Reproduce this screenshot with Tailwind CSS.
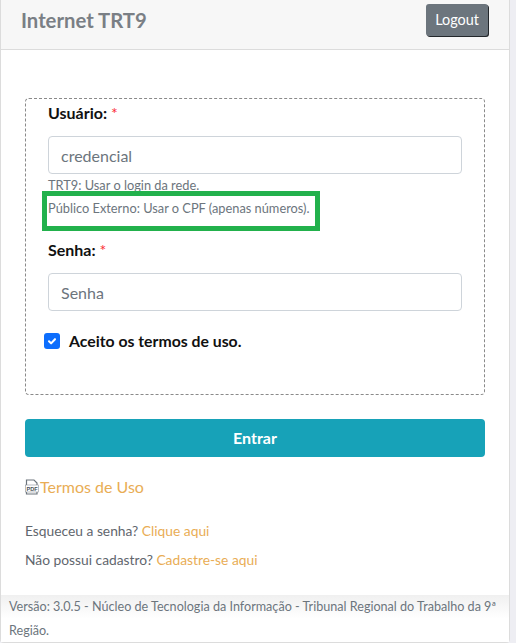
<!DOCTYPE html>
<html lang="pt-BR">
<head>
    <meta charset="UTF-8">
    <meta name="viewport" content="width=device-width, initial-scale=1.0">
    <title>Internet TRT9</title>
    <script src="https://cdn.jsdelivr.net/npm/@tailwindcss/browser@4"></script>
</head>
<body class="bg-[#eeeef3] font-['Lato','Noto_Sans',sans-serif] text-[#6c757d] h-[643px] overflow-hidden">
    <div class="relative w-[510px] h-[643px] bg-white border border-t-0 border-[#dcdcdc] rounded-b flex flex-col">
        <!-- cabecalho -->
        <div class="h-[50px] shrink-0 bg-[#f7f7f7] border-b border-[#dcdcdc] pl-5 pr-[21px] flex justify-between items-start">
            <h1 class="text-[20.3px] font-bold leading-6 mt-[8px] text-[#7a7f85]">Internet TRT9</h1>
            <button class="mt-1 w-[62px] h-[32px] bg-[#6c757d] text-white text-[14.4px] rounded-[3px] shadow-[1px_1px_0_0_#23272b]">Logout</button>
        </div>

        <div class="flex-1 px-6 pt-12">
            <!-- formulario -->
            <div class="h-[297px] border border-dashed border-[#8a8a8a] rounded px-[22px]">
                <label class="block text-base font-bold leading-6 mt-[2px] text-[#111]">Usuário: <span class="text-red-500 font-normal">*</span></label>
                <input class="block mt-[11px] w-[414px] h-[38px] px-3 border border-[#ced4da] rounded text-base text-[#6c757d] placeholder-[#6c757d]" placeholder="credencial">
                <p class="mt-[1px] text-[12.8px] leading-[21px] text-[#6c757d]">TRT9: Usar o login da rede.</p>
                <p class="text-[12.8px] leading-[24px] text-[#6c757d]">Público Externo: Usar o CPF (apenas números).</p>
                <label class="block mt-[18px] text-base font-bold leading-6 text-[#111]">Senha: <span class="text-red-500 font-normal">*</span></label>
                <input class="block mt-[11px] w-[414px] h-[38px] px-3 border border-[#ced4da] rounded text-base placeholder-[#6c757d]" placeholder="Senha">
                <div class="flex items-center mt-[18px] -ml-[4px]">
                    <span class="w-4 h-4 bg-[#0d6efd] rounded-[3px] flex items-center justify-center">
                        <svg width="12" height="12" viewBox="0 0 20 20" fill="none" stroke="#fff" stroke-width="3.4" stroke-linecap="round" stroke-linejoin="round"><path d="M5 10.5l3.5 3.5L15 7"/></svg>
                    </span>
                    <span class="ml-[9px] text-[15.8px] font-bold leading-6 text-[#111]">Aceito os termos de uso.</span>
                </div>
            </div>

            <button class="block w-full h-[38px] mt-6 bg-[#17a2b8] text-white text-base font-bold rounded">Entrar</button>

            <div class="flex items-center mt-[18px] h-6">
                <svg width="14" height="16" viewBox="0 0 14 16" fill="none" class="shrink-0 mr-[1px]">
                    <path d="M1.5 6V1h7.5l3 3v2M1.5 13v2h10.5v-2" stroke="#6c757d" stroke-width="1.2"/>
                    <rect x="0.5" y="6" width="13" height="7" fill="#fff" stroke="#8a9097" stroke-width="0.6"/>
                    <text x="7" y="11.6" text-anchor="middle" font-size="5.6" font-weight="700" font-family="Liberation Sans" fill="#4b5259">PDF</text>
                </svg>
                <a class="text-base text-[#e9ad55]">Termos de Uso</a>
            </div>

            <p class="mt-[21px] text-[13.8px] leading-[21px] text-[#5f666d]">Esqueceu a senha? <a class="text-[#e9ad55]">Clique aqui</a></p>
            <p class="mt-2 text-[13.8px] leading-[21px] text-[#5f666d]">Não possui cadastro? <a class="text-[#e9ad55]">Cadastre-se aqui</a></p>
        </div>

        <!-- rodape -->
        <div class="h-[47px] shrink-0 pl-2 pr-1 text-[12.6px] leading-6 text-[#6c757d] bg-gradient-to-b from-[#f0f0f0] to-white to-50%">Versão: 3.0.5 - Núcleo de Tecnologia da Informação - Tribunal Regional do Trabalho da 9ª Região.</div>

        <!-- destaque verde sobre a imagem -->
        <div class="absolute left-[41px] top-[191px] w-[278px] h-[40px] border-[5px] border-[#22b14c]"></div>
    </div>
</body>
</html>
